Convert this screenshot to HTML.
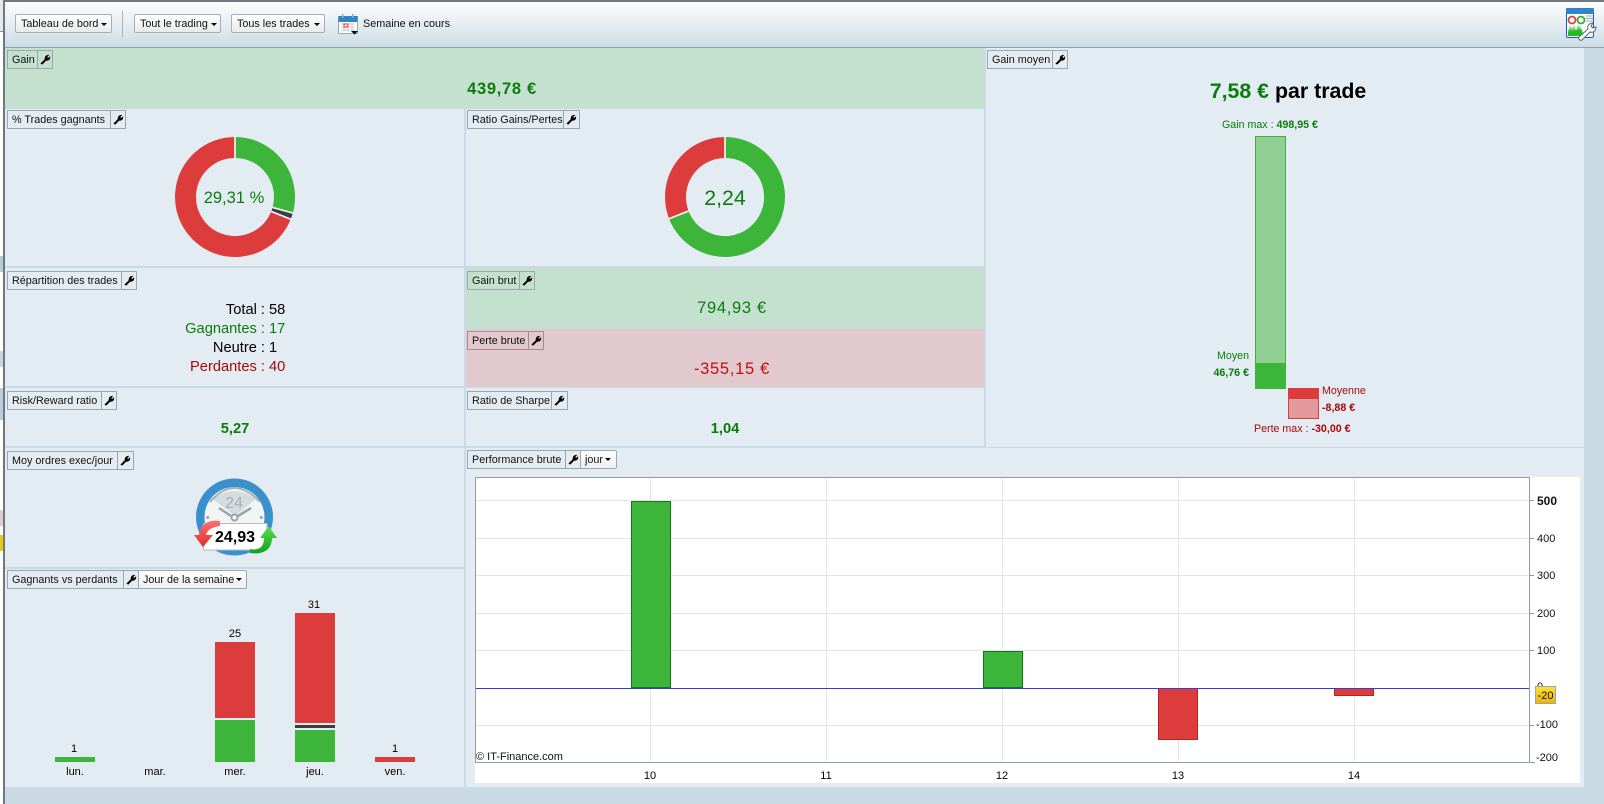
<!DOCTYPE html>
<html lang="fr"><head><meta charset="utf-8"><title>Tableau de bord</title>
<style>
html,body{margin:0;padding:0;width:1604px;height:804px;overflow:hidden;background:#c9dae4;font-family:"Liberation Sans",sans-serif;font-size:10.67px;color:#000}
div,span{position:absolute;box-sizing:border-box;white-space:nowrap}
.p{background:#e4ecf3}
.h{border:1px solid #9aa8ae;height:19px;line-height:18px;padding-left:4px;font-size:10.800px;color:#111}
.i{border:1px solid #9aa8ae;height:19px}
.i svg{position:absolute;left:2px;top:3px}
.i svg path{stroke:#000;stroke-width:.7}
.d{border:1px solid #9aa8ae;height:19px;line-height:18px;padding-left:4px;font-size:10.800px;background:linear-gradient(#fff,#eceff1);border-radius:0 2px 2px 0;color:#111}
.b{border:1px solid #a5b0b6;border-radius:2px;height:19px;line-height:18px;padding-left:5px;background:linear-gradient(#fff,#e8ebec);font-size:10.800px;color:#111}
.k{width:0;height:0;border-left:3.5px solid transparent;border-right:3.5px solid transparent;border-top:3.5px solid #000}
.t{height:20px;line-height:20px;text-align:center}
.g{color:#0a7d0a}.r{color:#a80808}
.l{height:1px;background:#e2e6e8}.v{width:1px;background:#e2e6e8}
.y{left:1537px;font-size:11px;line-height:14px;height:14px;color:#111}
</style></head><body>
<!-- left strip -->
<div style="left:0;top:0;width:3px;height:804px;background:#fff"></div>
<div style="left:0;top:0;width:3px;height:32px;background:#e6e9ec;border-bottom:1px solid #8a969c"></div>
<div style="left:0;top:256px;width:3px;height:16px;background:#b8ccdc"></div>
<div style="left:0;top:351px;width:3px;height:16px;background:#c8d6e2"></div>
<div style="left:0;top:388px;width:3px;height:32px;background:#b8ccdc"></div>
<div style="left:0;top:510px;width:3px;height:16px;background:#e8c8d8"></div>
<div style="left:0;top:535px;width:3px;height:16px;background:#e8c820"></div>
<div style="left:3px;top:0;width:2px;height:804px;background:#6c7a80"></div>

<!-- toolbar -->
<div style="left:5px;top:0;width:1599px;height:48px;background:linear-gradient(#fdfeff,#ccdce5);border-top:2px solid #6c7a80;border-bottom:1px solid #94a4ac"></div>
<div class="b" style="left:15px;top:14px;width:97px">Tableau de bord</div><div class="k" style="left:101px;top:23px"></div>
<div style="left:122px;top:11px;width:1px;height:26px;background:#aab6bc"></div>
<div class="b" style="left:134px;top:14px;width:87px">Tout le trading</div><div class="k" style="left:211px;top:23px"></div>
<div class="b" style="left:231px;top:14px;width:94px">Tous les trades</div><div class="k" style="left:314px;top:23px"></div>
<svg style="position:absolute;left:338px;top:14px" width="21" height="21" viewBox="0 0 21 21">
<rect x=".5" y="2.5" width="19" height="17" fill="#fff" stroke="#9aa8b2"/><rect x=".5" y="2" width="19" height="6" fill="#2f86c6"/>
<rect x="4" y="0" width="1.5" height="4" fill="#9ab"/><rect x="14" y="0" width="1.5" height="4" fill="#9ab"/>
<path d="M3 10h14M3 13h14M3 16h14M6 9v9M10 9v9M14 9v9" stroke="#c8d0d8" fill="none"/><rect x="6" y="10" width="4" height="3" fill="none" stroke="#e03030"/>
<path d="M13 17h7l-3.500 3.500z" fill="#000"/></svg>
<div style="left:363px;top:14px;height:20px;line-height:20px;font-size:10.800px;color:#111">Semaine en cours</div>
<svg style="position:absolute;left:1566px;top:8px;overflow:visible" width="30" height="32" viewBox="0 0 30 32">
<rect x=".5" y=".5" width="27" height="29" rx="1.500" fill="#fff" stroke="#1c5cb8"/><rect x="0" y="0" width="28" height="6" rx="1" fill="#2e86c8"/>
<circle cx="6" cy="12" r="3.500" fill="none" stroke="#d84040" stroke-width="1.800"/><circle cx="15" cy="12" r="3.500" fill="none" stroke="#30b030" stroke-width="1.800"/>
<path d="M20 8h7M20 10.500h7M20 13h7" stroke="#9aa4ac"/>
<path d="M2 28V20l1 4 1-7 1 6 1-5 1 6 1-8 1 7 1-3 1 3 1-7 1 6 1-5 1 6 1-3 1 8z" fill="#22bb22"/>
<path d="M13 29L22 21C21 18 23 15 27 15L25 18 27 20 30 19C30 23 27 25 24 24L16 32C14 33 12 31 13 29z" fill="#fff" stroke="#5a6670" stroke-width="1"/></svg>

<!-- panels -->
<div style="left:5px;top:48px;width:979px;height:60px;background:#c4e0ce"></div>
<div class="p" style="left:5px;top:109px;width:459px;height:157px"></div>
<div class="p" style="left:466px;top:109px;width:518px;height:157px"></div>
<div class="p" style="left:986px;top:48px;width:598px;height:399px"></div>
<div class="p" style="left:5px;top:268px;width:459px;height:118px"></div>
<div style="left:466px;top:268px;width:518px;height:60px;background:#c4e0ce"></div>
<div style="left:466px;top:329px;width:518px;height:58px;background:#e2c9cd"></div>
<div class="p" style="left:5px;top:388px;width:459px;height:58px"></div>
<div class="p" style="left:466px;top:388px;width:518px;height:58px"></div>
<div class="p" style="left:5px;top:448px;width:459px;height:119px"></div>
<div class="p" style="left:5px;top:569px;width:459px;height:218px"></div>
<div class="p" style="left:466px;top:448px;width:1118px;height:339px"></div>

<div class="h" style="left:7px;top:50px;width:31px">Gain</div><div class="i" style="left:37px;top:50px;width:16px"><svg width="11" height="11" viewBox="0 0 11 11"><path d="M1 9.500L5.200 5.300C4.600 3.500 5.800 1.200 8.500 1.200L6.800 3 8 4.500 9.800 3C10 5.500 7.800 6.800 6 6.200L2.200 10.200z"/></svg></div>
<div class="h" style="left:7px;top:110px;width:104px">% Trades gagnants</div><div class="i" style="left:110px;top:110px;width:16px"><svg width="11" height="11" viewBox="0 0 11 11"><path d="M1 9.500L5.200 5.300C4.600 3.500 5.800 1.200 8.500 1.200L6.800 3 8 4.500 9.800 3C10 5.500 7.800 6.800 6 6.200L2.200 10.200z"/></svg></div>
<div class="h" style="left:467px;top:110px;width:97px">Ratio Gains/Pertes</div><div class="i" style="left:563px;top:110px;width:17px"><svg width="11" height="11" viewBox="0 0 11 11"><path d="M1 9.500L5.200 5.300C4.600 3.500 5.800 1.200 8.500 1.200L6.800 3 8 4.500 9.800 3C10 5.500 7.800 6.800 6 6.200L2.200 10.200z"/></svg></div>
<div class="h" style="left:7px;top:271px;width:115px">Répartition des trades</div><div class="i" style="left:121px;top:271px;width:16px"><svg width="11" height="11" viewBox="0 0 11 11"><path d="M1 9.500L5.200 5.300C4.600 3.500 5.800 1.200 8.500 1.200L6.800 3 8 4.500 9.800 3C10 5.500 7.800 6.800 6 6.200L2.200 10.200z"/></svg></div>
<div class="h" style="left:467px;top:271px;width:53px">Gain brut</div><div class="i" style="left:519px;top:271px;width:16px"><svg width="11" height="11" viewBox="0 0 11 11"><path d="M1 9.500L5.200 5.300C4.600 3.500 5.800 1.200 8.500 1.200L6.800 3 8 4.500 9.800 3C10 5.500 7.800 6.800 6 6.200L2.200 10.200z"/></svg></div>
<div class="h" style="left:467px;top:331px;width:62px;border-color:#a88a90">Perte brute</div><div class="i" style="left:528px;top:331px;width:16px;border-color:#a88a90"><svg width="11" height="11" viewBox="0 0 11 11"><path d="M1 9.500L5.200 5.300C4.600 3.500 5.800 1.200 8.500 1.200L6.800 3 8 4.500 9.800 3C10 5.500 7.800 6.800 6 6.200L2.200 10.200z"/></svg></div>
<div class="h" style="left:7px;top:391px;width:95px">Risk/Reward ratio</div><div class="i" style="left:101px;top:391px;width:16px"><svg width="11" height="11" viewBox="0 0 11 11"><path d="M1 9.500L5.200 5.300C4.600 3.500 5.800 1.200 8.500 1.200L6.800 3 8 4.500 9.800 3C10 5.500 7.800 6.800 6 6.200L2.200 10.200z"/></svg></div>
<div class="h" style="left:467px;top:391px;width:85px">Ratio de Sharpe</div><div class="i" style="left:551px;top:391px;width:17px"><svg width="11" height="11" viewBox="0 0 11 11"><path d="M1 9.500L5.200 5.300C4.600 3.500 5.800 1.200 8.500 1.200L6.800 3 8 4.500 9.800 3C10 5.500 7.800 6.800 6 6.200L2.200 10.200z"/></svg></div>
<div class="h" style="left:7px;top:451px;width:111px">Moy ordres exec/jour</div><div class="i" style="left:117px;top:451px;width:17px"><svg width="11" height="11" viewBox="0 0 11 11"><path d="M1 9.500L5.200 5.300C4.600 3.500 5.800 1.200 8.500 1.200L6.800 3 8 4.500 9.800 3C10 5.500 7.800 6.800 6 6.200L2.200 10.200z"/></svg></div>
<div class="h" style="left:467px;top:450px;width:99px">Performance brute</div><div class="i" style="left:565px;top:450px;width:16px"><svg width="11" height="11" viewBox="0 0 11 11"><path d="M1 9.500L5.200 5.300C4.600 3.500 5.800 1.200 8.500 1.200L6.800 3 8 4.500 9.800 3C10 5.500 7.800 6.800 6 6.200L2.200 10.200z"/></svg></div><div class="d" style="left:580px;top:450px;width:37px">jour</div><div class="k" style="left:605px;top:458px"></div>
<div class="h" style="left:7px;top:570px;width:117px">Gagnants vs perdants</div><div class="i" style="left:123px;top:570px;width:16px"><svg width="11" height="11" viewBox="0 0 11 11"><path d="M1 9.500L5.200 5.300C4.600 3.500 5.800 1.200 8.500 1.200L6.800 3 8 4.500 9.800 3C10 5.500 7.800 6.800 6 6.200L2.200 10.200z"/></svg></div><div class="d" style="left:138px;top:570px;width:109px">Jour de la semaine</div><div class="k" style="left:236px;top:578px"></div>
<div class="h" style="left:987px;top:50px;width:66px">Gain moyen</div><div class="i" style="left:1052px;top:50px;width:16px"><svg width="11" height="11" viewBox="0 0 11 11"><path d="M1 9.500L5.200 5.300C4.600 3.500 5.800 1.200 8.500 1.200L6.800 3 8 4.500 9.800 3C10 5.500 7.800 6.800 6 6.200L2.200 10.200z"/></svg></div>

<!-- values -->
<div class="t g" style="left:402px;width:200px;top:79px;font-size:16.500px;letter-spacing:.7px;font-weight:bold">439,78 €</div>
<svg style="position:absolute;left:0;top:0" width="1604" height="804">
<g fill="none" stroke-width="21">
<path d="M235 147.500A49.500 49.500 0 0 1 282.700 210.230" stroke="#3db53b"/>
<path d="M282.700 210.230A49.500 49.500 0 0 1 281 215.300" stroke="#3a3f42"/>
<path d="M281 215.300A49.500 49.500 0 1 1 235 147.500" stroke="#dd3c3c"/>
<path d="M725 147.500A49.500 49.500 0 1 1 678.850 214.900" stroke="#3db53b"/>
<path d="M678.850 214.900A49.500 49.500 0 0 1 725 147.500" stroke="#dd3c3c"/>
</g>
<g stroke="#f0f4f6" stroke-width="1.700">
<line x1="235" y1="158" x2="235" y2="136.500"/><line x1="235" y1="158" x2="235" y2="136.500" transform="rotate(105.5 235 197)"/><line x1="235" y1="158" x2="235" y2="136.500" transform="rotate(111.7 235 197)"/>
<line x1="725" y1="158" x2="725" y2="136.500"/><line x1="725" y1="158" x2="725" y2="136.500" transform="rotate(248.8 725 197)"/>
</g>
<!-- gauge -->
<defs><linearGradient id="rg" x1="0" y1="0" x2="0" y2="1"><stop offset="0" stop-color="#ff7070"/><stop offset="1" stop-color="#e02c2c"/></linearGradient>
<linearGradient id="gg" x1="0" y1="0" x2="0" y2="1"><stop offset="0" stop-color="#58e048"/><stop offset="1" stop-color="#10a020"/></linearGradient></defs>
<circle cx="234.500" cy="517" r="38.500" fill="#3a90cc"/>
<circle cx="234.500" cy="517" r="30" fill="#f2f5f6"/>
<path d="M213 499Q234 483 256 499L235 516z" fill="#d6dcde"/>
<path d="M210 502Q234 474 260 502" fill="none" stroke="#a8b2b6" stroke-width="2"/>
<text x="234" y="508" text-anchor="middle" font-family="Liberation Sans" font-size="16" fill="#a6b0b4">24</text>
<path d="M219 508L231 516M251 508L238 516" stroke="#9aa4a8" stroke-width="2.500" fill="none"/>
<circle cx="234.500" cy="517.500" r="3" fill="#fff" stroke="#9aa4a8" stroke-width="2"/>
<circle cx="207.700" cy="517.500" r="1.500" fill="#9aa4a8"/><circle cx="261.300" cy="517.500" r="1.500" fill="#9aa4a8"/>
<path d="M203.500 523.500H267V550H203.500z" fill="#fff" stroke="#b4bcc0"/>
<path d="M220 521C207 519 200 526 199 535H194L203 547 213 535H206C207 530 212 527 220 526z" fill="url(#rg)"/>
<path d="M250 549C260 551 264 546 264 538H260L268.700 526 277 538H272C272 549 264 555 250 553z" fill="url(#gg)"/>
<!-- Gain moyen bars -->
<rect x="1255.500" y="136.500" width="30" height="252" fill="#90d095" stroke="#3db53b"/>
<rect x="1255" y="363" width="31" height="26" fill="#3db53b"/>
<rect x="1288.500" y="388.500" width="30" height="30" fill="#e29a9c" stroke="#dd3c3c"/>
<rect x="1288" y="388" width="31" height="11" fill="#dd3c3c"/>
<!-- bottom-left bars -->
<rect x="55" y="757" width="40" height="5" fill="#3db53b"/>
<rect x="215" y="642" width="40" height="76" fill="#dd3c3c"/><rect x="215" y="720" width="40" height="42" fill="#3db53b"/>
<rect x="295" y="613" width="40" height="110" fill="#dd3c3c"/><rect x="295" y="725" width="40" height="3" fill="#3a3f42"/><rect x="295" y="730" width="40" height="32" fill="#3db53b"/>
<rect x="375" y="757" width="40" height="5" fill="#dd3c3c"/>
</svg>
<div class="t g" style="left:134px;width:200px;top:188px;font-size:16.500px">29,31 %</div>
<div class="t g" style="left:625px;width:200px;top:188px;font-size:21.330px">2,24</div>
<div class="t" style="left:130px;width:135px;top:300px;font-size:14.670px;text-align:right">Total :</div><div class="t" style="left:269px;top:300px;font-size:14.670px">58</div>
<div class="t g" style="left:130px;width:135px;top:319px;font-size:14.670px;text-align:right">Gagnantes :</div><div class="t g" style="left:269px;top:319px;font-size:14.670px">17</div>
<div class="t" style="left:130px;width:135px;top:338px;font-size:14.670px;text-align:right">Neutre :</div><div class="t" style="left:269px;top:338px;font-size:14.670px">1</div>
<div class="t r" style="left:130px;width:135px;top:357px;font-size:14.670px;text-align:right">Perdantes :</div><div class="t r" style="left:269px;top:357px;font-size:14.670px">40</div>
<div class="t g" style="left:632px;width:200px;top:298px;font-size:16.500px;letter-spacing:.7px">794,93 €</div>
<div class="t r" style="left:632px;width:200px;top:359px;font-size:16.500px;letter-spacing:.7px;color:#c01010">-355,15 €</div>
<div class="t g" style="left:135px;width:200px;top:419px;font-size:14.670px;font-weight:bold">5,27</div>
<div class="t g" style="left:625px;width:200px;top:419px;font-size:14.670px;font-weight:bold">1,04</div>
<div class="t" style="left:205px;width:60px;top:528px;font-size:16px;font-weight:bold">24,93</div>
<div class="t" style="left:1198px;width:180px;top:81px;font-size:21.330px;font-weight:bold"><b class="g">7,58 €</b> par trade</div>
<div class="t g" style="left:1220px;width:100px;top:115px">Gain max : <b>498,95 €</b></div>
<div class="t g" style="left:1149px;width:100px;top:346px;text-align:right">Moyen</div>
<div class="t g" style="left:1149px;width:100px;top:363px;text-align:right;font-weight:bold">46,76 €</div>
<div class="t r" style="left:1322px;top:381px">Moyenne</div>
<div class="t r" style="left:1322px;top:398px;font-weight:bold">-8,88 €</div>
<div class="t r" style="left:1254px;top:419px">Perte max : <b>-30,00 €</b></div>
<div class="t" style="left:44px;width:60px;top:739px;font-size:11px">1</div>
<div class="t" style="left:205px;width:60px;top:624px;font-size:11px">25</div>
<div class="t" style="left:284px;width:60px;top:595px;font-size:11px">31</div>
<div class="t" style="left:365px;width:60px;top:739px;font-size:11px">1</div>
<div class="t" style="left:45px;width:60px;top:762px;font-size:11px">lun.</div>
<div class="t" style="left:125px;width:60px;top:762px;font-size:11px">mar.</div>
<div class="t" style="left:205px;width:60px;top:762px;font-size:11px">mer.</div>
<div class="t" style="left:285px;width:60px;top:762px;font-size:11px">jeu.</div>
<div class="t" style="left:365px;width:60px;top:762px;font-size:11px">ven.</div>

<!-- chart -->
<div style="left:475px;top:477px;width:1105px;height:306px;background:#fff"></div>
<div class="l" style="left:476px;top:500px;width:1053px"></div>
<div class="l" style="left:476px;top:538px;width:1053px"></div>
<div class="l" style="left:476px;top:575px;width:1053px"></div>
<div class="l" style="left:476px;top:613px;width:1053px"></div>
<div class="l" style="left:476px;top:650px;width:1053px"></div>
<div class="l" style="left:476px;top:725px;width:1053px"></div>
<div class="v" style="left:650px;top:478px;height:284px"></div>
<div class="v" style="left:826px;top:478px;height:284px"></div>
<div class="v" style="left:1002px;top:478px;height:284px"></div>
<div class="v" style="left:1178px;top:478px;height:284px"></div>
<div class="v" style="left:1354px;top:478px;height:284px"></div>
<div style="left:475px;top:477px;height:1px;background:#8e9ea6;width:1055px"></div>
<div style="left:475px;top:477px;width:1px;height:286px;background:#8e9ea6"></div>
<div style="left:1529px;top:477px;width:1px;height:286px;background:#8e9ea6"></div>
<div style="left:475px;top:762px;width:1060px;height:1px;background:#8e9ea6"></div>
<div style="left:1529px;top:500px;width:5px;height:1px;background:#8e9ea6"></div>
<div style="left:1529px;top:538px;width:5px;height:1px;background:#8e9ea6"></div>
<div style="left:1529px;top:575px;width:5px;height:1px;background:#8e9ea6"></div>
<div style="left:1529px;top:613px;width:5px;height:1px;background:#8e9ea6"></div>
<div style="left:1529px;top:650px;width:5px;height:1px;background:#8e9ea6"></div>
<div style="left:1529px;top:725px;width:5px;height:1px;background:#8e9ea6"></div>
<div style="left:631px;top:501px;width:40px;height:187px;background:#3db53b;border:1px solid #0f7a1a"></div>
<div style="left:983px;top:651px;width:40px;height:37px;background:#3db53b;border:1px solid #0f7a1a"></div>
<div style="left:1158px;top:688px;width:40px;height:52px;background:#dd3c3c;border:1px solid #c02020"></div>
<div style="left:1334px;top:688px;width:40px;height:8px;background:#dd3c3c;border:1px solid #c02020"></div>
<div style="left:476px;top:688px;width:1053px;height:1px;background:#3a3ad0"></div>
<div class="y" style="top:494px;font-weight:bold;font-size:12px">500</div>
<div class="y" style="top:532px">400</div>
<div class="y" style="top:569px">300</div>
<div class="y" style="top:607px">200</div>
<div class="y" style="top:644px">100</div>
<div class="y" style="top:680px">0</div>
<div class="y" style="left:1536px;top:718px">-100</div>
<div class="y" style="left:1536px;top:751px">-200</div>
<div style="left:1535px;top:686px;width:21px;height:18px;background:linear-gradient(#ffdf30,#f0b400);border:1px solid #9aa8ae;line-height:18px;font-size:11px;text-align:center;color:#111">-20</div>
<div class="t" style="left:620px;width:60px;top:766px;font-size:11px">10</div>
<div class="t" style="left:796px;width:60px;top:766px;font-size:11px">11</div>
<div class="t" style="left:972px;width:60px;top:766px;font-size:11px">12</div>
<div class="t" style="left:1148px;width:60px;top:766px;font-size:11px">13</div>
<div class="t" style="left:1324px;width:60px;top:766px;font-size:11px">14</div>
<div style="left:476px;top:750px;height:14px;line-height:14px;font-size:11px;color:#111">© IT-Finance.com</div>
</body></html>
